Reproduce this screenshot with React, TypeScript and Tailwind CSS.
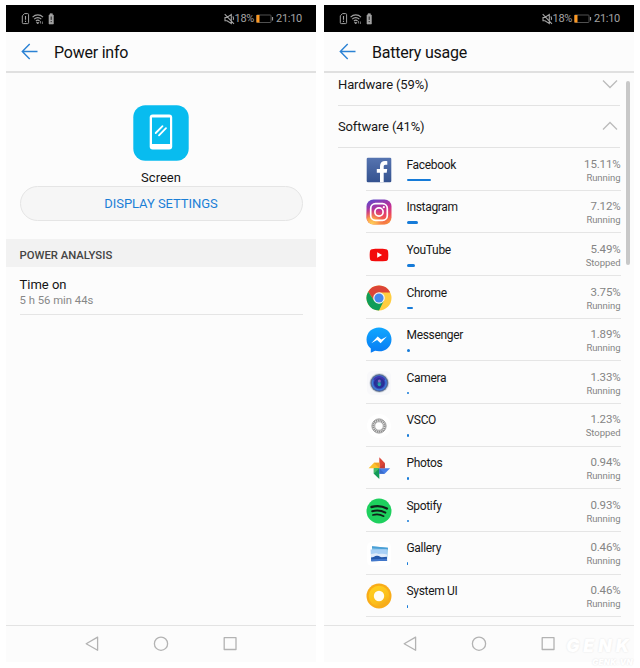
import type { ReactNode } from "react";

function StatusBar() {
  return (
    <div className="flex h-[26.500px] shrink-0 items-center bg-black pl-[15px] pr-[15px] text-[#a3a3a3]">
      <svg width="36" height="14" viewBox="0 0 36 14" fill="none" stroke="currentColor">
        <path d="M1.3 3.8 3.6 1.6h3a1 1 0 0 1 1 1v8a1 1 0 0 1-1 1H2.3a1 1 0 0 1-1-1z" strokeWidth="1" />
        <path d="M4.5 4v3.8M4.5 8.7v1.2" strokeWidth="1.1" />
        <path d="M11.6 5.2c3-3.1 7.4-3.1 10.4 0M13.2 7.2c2.1-2.1 5-2.1 7.1 0M14.9 9.1c1.1-1.1 2.6-1.1 3.7 0" strokeWidth="1.1" />
        <path d="m16.7 12-1.2-1.5h2.4zM19.5 9v2.5M21.4 9.5V12" fill="currentColor" strokeWidth=".7" />
        <path d="M28 3h1v-1.3h2.4V3h1v9H28z" fill="currentColor" strokeWidth=".6" />
        <path d="M30.2 4.5v3.4M30.2 9v1.2" stroke="#222" strokeWidth="1" />
      </svg>
      <div className="ml-auto flex items-center">
        <svg width="11" height="12" viewBox="0 0 11 12" fill="none" stroke="currentColor" strokeWidth="1.1">
          <path d="M1 4.5h1.800L7.300 1.500v9L3 7.700H1zM.7 1.200l9.300 9.600M8.800 3.300c.8.9.9 2.500.4 3.700" />
        </svg>
        <span className="w-[19.500px] text-[11px] leading-[14px] whitespace-nowrap tracking-[-0.300px]">18%</span>
        <svg className="ml-[2px]" width="18" height="10" viewBox="0 0 18 10">
          <rect x=".5" y="1" width="14.5" height="7.5" rx=".7" fill="none" stroke="#666" strokeWidth=".8" />
          <rect x=".5" y="1" width="3" height="7.5" fill="#ff981f" />
          <path d="M16.5 3v3.5" stroke="#999" strokeWidth="1.2" />
        </svg>
        <span className="ml-[2px] w-[25px] text-[11px] leading-[14px] whitespace-nowrap tracking-[-0.300px]">21:10</span>
      </div>
    </div>
  );
}

function NavBar() {
  return (
    <div className="flex h-[37px] shrink-0 justify-center border-t border-[#e3e3e3]">
      <svg width="160" height="36" viewBox="0 0 160 36" fill="none" stroke="#b3b3b3" strokeWidth="1.3" strokeLinejoin="round">
        <path d="M5.200 17.700 16.600 11.100v13.200z" />
        <circle cx="80" cy="17.700" r="6.600" />
        <rect x="143.200" y="11.700" width="11.800" height="11.800" />
      </svg>
    </div>
  );
}

function Phone({ title, children }: { title: string; children: ReactNode }) {
  return (
    <section className="flex h-[656.700px] w-[310px] flex-col bg-[#fcfcfc]">
      <StatusBar />
      <header className="flex h-[41px] shrink-0 items-center border-b-2 border-[#e0e0e0] pl-[15px] pt-[2px]">
        <svg width="18" height="18" viewBox="0 0 18 18" fill="none" stroke="#2b82d4" strokeWidth="1.4">
          <path d="M16.500 8.500H1.300M8.700 1 1.300 8.500l7.400 7.500" />
        </svg>
        <h1 className="ml-[15px] pt-[2px] text-[16px] leading-[20px] tracking-[-0.230px] text-[#111]">{title}</h1>
      </header>
      <main className="flex min-h-0 flex-1 flex-col overflow-hidden">{children}</main>
      <NavBar />
    </section>
  );
}

function FacebookIcon() {
  return (
    <svg width="26" height="26" viewBox="0 0 26 26">
      <defs><linearGradient id="fb" x2="0" y2="1"><stop stopColor="#5674b0" /><stop offset="1" stopColor="#34528f" /></linearGradient></defs>
      <rect x=".7" y=".7" width="24.6" height="24.6" rx="1.3" fill="url(#fb)" />
      <path d="M14 25.3v-9.6h-3.200V12H14V9.300c0-3.500 2-5.300 5.100-5.300 1 0 1.800.1 2.200.2v3.500h-1.700c-1.500 0-1.900.8-1.900 1.900V12h3.500l-.5 3.700h-3v9.600z" fill="#fff" />
    </svg>
  );
}

function InstagramIcon() {
  return (
    <svg width="26" height="26" viewBox="0 0 26 26">
      <defs>
        <linearGradient id="ig" x1=".25" x2=".6" y2="1"><stop stopColor="#6448c8" /><stop offset=".45" stopColor="#c32e96" /><stop offset=".75" stopColor="#ee4a5b" /><stop offset="1" stopColor="#f7893d" /></linearGradient>
        <radialGradient id="ig2" cx=".2" cy="1" r=".65"><stop stopColor="#fed65c" /><stop offset=".4" stopColor="#fba24b" /><stop offset="1" stopColor="#f04b4b" stopOpacity="0" /></radialGradient>
      </defs>
      <rect x=".5" y=".5" width="25" height="25" rx="7" fill="url(#ig)" />
      <rect x=".5" y=".5" width="25" height="25" rx="7" fill="url(#ig2)" />
      <rect x="4.7" y="4.7" width="16.6" height="16.6" rx="4.8" fill="none" stroke="#fff" strokeWidth="1.7" />
      <circle cx="13" cy="13" r="4.1" fill="none" stroke="#fff" strokeWidth="1.7" />
      <circle cx="17.8" cy="8.2" r="1.1" fill="#fff" />
    </svg>
  );
}

function YouTubeIcon() {
  return (
    <svg width="26" height="26" viewBox="0 0 26 26">
      <path d="M6 7.2c4-.5 10-.5 14 0 1.300.2 2 1 2.100 2.200.3 2.500.3 5 0 7.300-.1 1.200-.8 2-2.100 2.200-4 .5-10 .5-14 0-1.300-.2-2-1-2.100-2.200-.3-2.500-.3-5 0-7.300C4 8.200 4.700 7.400 6 7.200z" fill="#f30b0b" />
      <path d="m11.200 10.300 4.900 2.700-4.900 2.700z" fill="#fff" />
    </svg>
  );
}

function ChromeIcon() {
  return (
    <svg width="26" height="26" viewBox="0 0 26 26">
      <circle cx="13" cy="13" r="12.5" fill="#ffcd40" />
      <path d="M2.170 6.750A12.500 12.500 0 0 1 23.830 6.750L24 7.500H13L8.200 15.700z" fill="#dc4437" />
      <path d="M2.170 6.750A12.500 12.500 0 0 0 13 25.500L17.800 15.700 13 18.500 8.200 15.700z" fill="#109d58" />
      <circle cx="13" cy="13" r="5.800" fill="#f4f6f4" />
      <circle cx="13" cy="13" r="4.600" fill="#4688ed" />
    </svg>
  );
}

function MessengerIcon() {
  return (
    <svg width="26" height="26" viewBox="0 0 26 26">
      <defs><linearGradient id="ms" x2="0" y2="1"><stop stopColor="#10a7ff" /><stop offset="1" stopColor="#087bf3" /></linearGradient></defs>
      <path d="M13 .5c7 0 12.500 5 12.500 11.900S20 24.300 13 24.300c-1.400 0-2.700-.2-3.900-.5L4.800 25.800v-4.200C2.200 19.400.5 16.200.5 12.400.5 5.500 6 .5 13 .5z" fill="url(#ms)" />
      <path d="m5.300 16.300 6.400-6.900 3.500 3.200 5.700-3.200-6.300 6.900-3.500-3.300z" fill="#fff" />
    </svg>
  );
}

function CameraIcon() {
  return (
    <svg width="26" height="26" viewBox="0 0 26 26">
      <defs><radialGradient id="cam" cy=".5"><stop stopColor="#1ba0b0" /><stop offset=".28" stopColor="#263c9a" /><stop offset=".6" stopColor="#2b2a96" /><stop offset=".85" stopColor="#4080df" /><stop offset="1" stopColor="#3c5cae" /></radialGradient></defs>
      <rect x="1" y="1" width="24" height="24" rx="5" fill="#f8f8fa" />
      <circle cx="13.300" cy="13" r="10" fill="#d5dbe3" />
      <circle cx="13.300" cy="13" r="9" fill="#66758f" />
      <circle cx="13.300" cy="13" r="8" fill="url(#cam)" />
      <path d="M8 10c2-4 8.300-4 10.500 0" stroke="#4034ad" strokeWidth="2" fill="none" />
      <circle cx="13.300" cy="11" r="1.500" fill="#8a65bf" />
      <circle cx="13.300" cy="14.600" r="1.600" fill="#22a7a5" />
    </svg>
  );
}

function VscoIcon() {
  return (
    <svg width="26" height="26" viewBox="0 0 26 26" fill="none" stroke="#8f8f8f">
      <circle cx="13" cy="13" r="12" fill="#fff" stroke="none" />
      <circle cx="13" cy="13" r="7.100" strokeWidth=".9" />
      <circle cx="13" cy="13" r="5.700" strokeWidth="2" strokeDasharray="1.400 .5" />
      <circle cx="13" cy="13" r="4.300" strokeWidth=".8" />
    </svg>
  );
}

function PhotosIcon() {
  return (
    <svg width="26" height="26" viewBox="0 0 26 26">
      <path d="M13.300 2.300 18.800 8v5.300h-5.500z" fill="#dc4537" />
      <path d="M13.300 7.800v5.500H2.600L8 7.800z" fill="#fbc12d" />
      <path d="M13.300 13.300v10.800L7.800 18.700v-5.400z" fill="#139b58" />
      <path d="M13.300 13.300h10.800L18.700 18.800h-5.400z" fill="#477fe8" />
      <path d="M13.300 7.800v5.500L7.800 7.800z" fill="#f1a324" />
      <path d="M18.800 13.300h-5.500l5.500-5.300z" fill="#c43c38" />
      <path d="M7.800 18.700v-5.400h5.500z" fill="#47bc69" />
      <path d="M18.700 18.800h-5.400v-5.500z" fill="#3a6bcb" />
    </svg>
  );
}

function SpotifyIcon() {
  return (
    <svg width="26" height="26" viewBox="0 0 26 26" fill="none" stroke="#10201a" strokeLinecap="round">
      <circle cx="13" cy="13" r="12.500" fill="#1ed05e" stroke="none" />
      <path d="M5.500 9c5.500-1.500 11-.9 15.400 1.500" strokeWidth="2.400" />
      <path d="M6.200 13.200c4.700-1.300 9.300-.7 13.200 1.400" strokeWidth="2" />
      <path d="M6.900 17c4-1 7.500-.6 10.800 1.200" strokeWidth="1.700" />
    </svg>
  );
}

function GalleryIcon() {
  return (
    <svg width="26" height="26" viewBox="0 0 26 26">
      <rect x="1" y="1" width="24" height="24" rx="5" fill="#fff" />
      <path d="m6 5.200 15.900 1.500-.7 11H6z" fill="#7fc0e4" />
      <path d="m6 5.200 15.900 1.500-.1 1.700L6 7.300z" fill="#4ba0d6" />
      <path d="m4.500 8.600 16.300-.4.300 11.500-15.700.6z" fill="#a9d0f6" />
      <path d="M4.900 13c4 .2 5-1.700 7.400 0 2.700.2 5-.9 8.600.6l.2 3H5.200z" fill="#dfebfa" />
      <path d="M5 16.500c3 0 4-2.300 6.500-1.700 2 .2 2.500 1.500 4.300 1.500l5.100-.6.200 4-15.800.6z" fill="#2458ab" />
      <path d="m5.300 18.200 15.700-.5.100 2-15.700.6z" fill="#4278cc" />
    </svg>
  );
}

function SystemIcon() {
  return (
    <svg width="26" height="26" viewBox="0 0 26 26">
      <defs><linearGradient id="sy" x1=".3" y1=".2" x2=".8" y2="1"><stop stopColor="#ffcc1d" /><stop offset=".6" stopColor="#fbbd1a" /><stop offset="1" stopColor="#f3a51a" /></linearGradient></defs>
      <circle cx="13" cy="13" r="12.500" fill="#f9ac18" />
      <circle cx="13" cy="13" r="10.300" fill="url(#sy)" />
      <circle cx="13" cy="13" r="5.200" fill="#fffdf3" />
    </svg>
  );
}

const apps = [
  { name: "Facebook", value: "15.11%", state: "Running", bar: 24, icon: <FacebookIcon /> },
  { name: "Instagram", value: "7.12%", state: "Running", bar: 11, icon: <InstagramIcon /> },
  { name: "YouTube", value: "5.49%", state: "Stopped", bar: 8.5, icon: <YouTubeIcon /> },
  { name: "Chrome", value: "3.75%", state: "Running", bar: 6, icon: <ChromeIcon /> },
  { name: "Messenger", value: "1.89%", state: "Running", bar: 3.5, icon: <MessengerIcon /> },
  { name: "Camera", value: "1.33%", state: "Running", bar: 2.7, icon: <CameraIcon /> },
  { name: "VSCO", value: "1.23%", state: "Stopped", bar: 2.5, icon: <VscoIcon /> },
  { name: "Photos", value: "0.94%", state: "Running", bar: 2, icon: <PhotosIcon /> },
  { name: "Spotify", value: "0.93%", state: "Running", bar: 2, icon: <SpotifyIcon /> },
  { name: "Gallery", value: "0.46%", state: "Running", bar: 1.2, icon: <GalleryIcon /> },
  { name: "System UI", value: "0.46%", state: "Running", bar: 1.2, icon: <SystemIcon /> },
];

function PowerInfo() {
  return (
    <Phone title="Power info">
      <div className="flex flex-col items-center px-[13px] pt-[32px]">
        <svg width="56" height="56" viewBox="0 0 56 56">
          <rect x=".3" y=".3" width="55.400" height="55.400" rx="12" fill="#08bcef" />
          <rect x="16.700" y="9.500" width="22.500" height="35" rx="3" fill="#fff" />
          <rect x="19" y="12.500" width="18" height="26.500" fill="#08bcef" />
          <path d="m22.700 28 6.800-6.800M26 30.300l7-7.100" stroke="#fff" strokeWidth="1.800" strokeLinecap="round" />
        </svg>
        <p className="mt-[9px] text-[13px] leading-[16px] text-[#151515]">Screen</p>
        <button className="flex h-[35px] w-[283px] items-center justify-center rounded-full border border-[#e5e5e5] bg-[#f6f6f6] text-[13px] tracking-[-0.050px] text-[#1b7fd6]">DISPLAY SETTINGS</button>
      </div>
      <h2 className="mt-[18px] flex h-[28px] items-center bg-[#f2f2f2] pl-[13.500px] pt-[7px] text-[11.300px] font-medium text-[#444]">POWER ANALYSIS</h2>
      <div className="mx-[13.500px] h-[48.500px] border-b border-[#e5e5e5] pt-[9px]">
        <p className="text-[13px] leading-[17px] text-[#151515]">Time on</p>
        <p className="text-[11.300px] leading-[15px] text-[#888]">5 h 56 min 44s</p>
      </div>
    </Phone>
  );
}

function Group({ title, path, className }: { title: string; path: string; className: string }) {
  return (
    <div className={`mx-[14px] flex shrink-0 justify-between border-b border-[#e3e3e3] text-[13px] leading-[16px] tracking-[-0.130px] text-[#181818] ${className}`}>
      <span>{title}</span>
      <svg className="mr-[2px] mt-[2px]" width="16" height="10" viewBox="0 0 16 10" fill="none" stroke="#bbb" strokeWidth="1.300"><path d={path} /></svg>
    </div>
  );
}

function BatteryUsage() {
  return (
    <Phone title="Battery usage">
      <div className="relative">
        <Group title="Hardware (59%)" path="m1 1.500 7 7 7-7" className="h-[33px] pt-[4.500px]" />
        <Group title="Software (41%)" path="m1 8.500 7-7 7 7" className="h-[42.300px] pt-[13.500px]" />
        <ul className="ml-[41.500px] mr-[13.500px]">
          {apps.map((app) => (
            <li key={app.name} className="flex h-[42.650px] border-b border-[#e5e5e5]">
              <div className="mt-[8.700px] h-[26px] w-[26px]">{app.icon}</div>
              <div className="ml-[15px] pt-[8.500px]">
                <p className="text-[12px] leading-[16px] tracking-[-0.320px] text-[#181818]">{app.name}</p>
                <div className="mt-[6px] h-[2.700px] rounded-full bg-[#167bd8]" style={{ width: app.bar }} />
              </div>
              <div className="ml-auto pt-[8.500px] text-right text-[#858585]">
                <p className="text-[11.500px] leading-[15px] tracking-[-0.150px]">{app.value}</p>
                <p className="text-[9.500px] leading-[12px] tracking-[-0.050px]">{app.state}</p>
              </div>
            </li>
          ))}
        </ul>
        <div className="absolute left-[301.700px] top-[8px] h-[184px] w-[4px] rounded-full bg-[#c8c8c8]" />
      </div>
    </Phone>
  );
}

export default function App() {
  return (
    <div className="relative flex h-[668px] w-[640px] gap-[8px] overflow-hidden bg-white pl-[6px] pt-[5.300px] font-['Roboto',sans-serif]">
      <PowerInfo />
      <BatteryUsage />
      <div className="absolute left-[560px] top-[635px] flex w-[73px] flex-col items-end font-['Inter',sans-serif] font-black italic text-white [text-shadow:0_0_2px_#e2e2e2]">
        <p className="text-[17.500px] leading-[22px] tracking-[4px]">GENK</p>
        <p className="text-[8px] leading-[10px] tracking-[0.300px]">GENK.VN</p>
      </div>
    </div>
  );
}
